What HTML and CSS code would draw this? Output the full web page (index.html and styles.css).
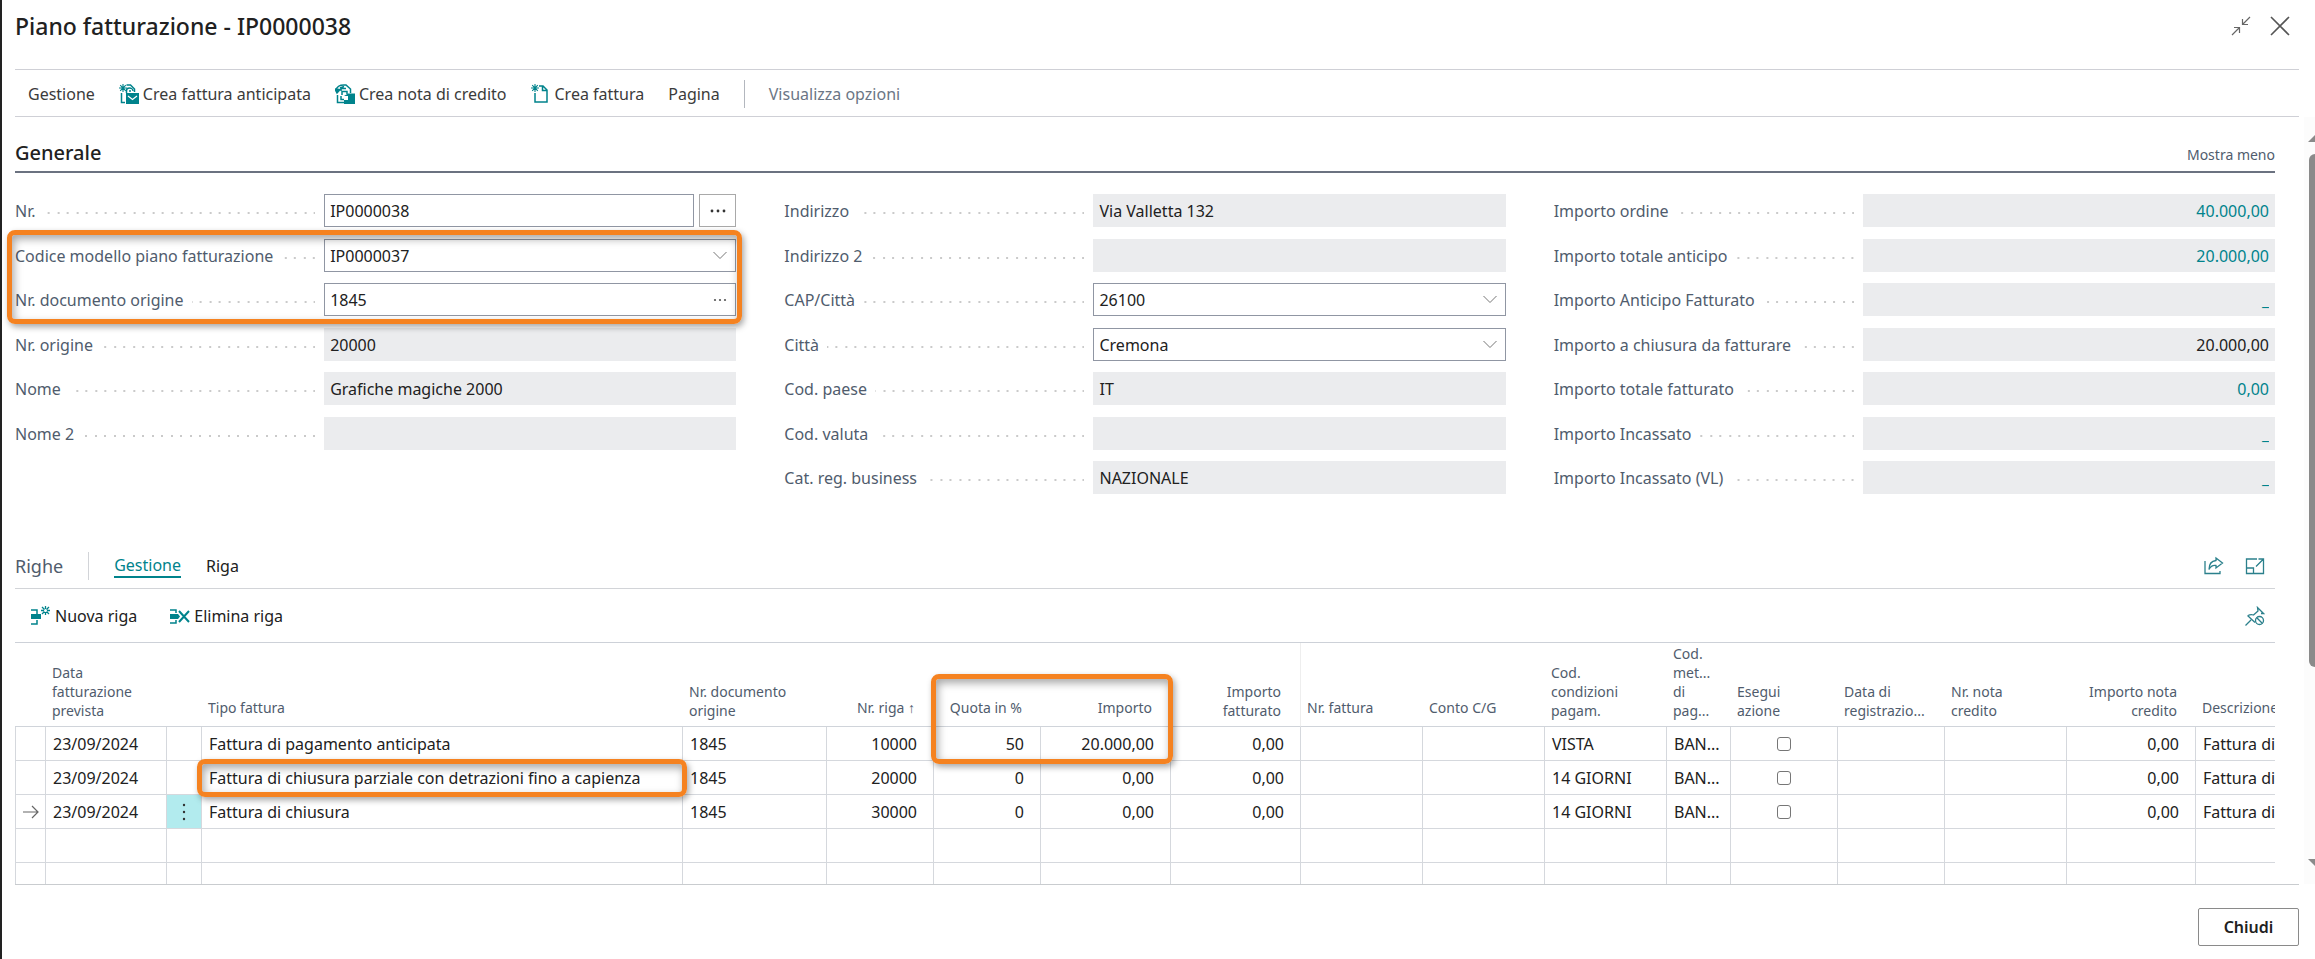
FILE: index.html
```html
<!DOCTYPE html>
<html lang="it">

<head>
    <meta charset="utf-8">
    <title>Piano fatturazione - IP0000038</title>
    <link rel="stylesheet" href="styles.css">
</head>

<body>
    <div class="dialog">
        <header class="dialog-header">
            <h1>Piano fatturazione - IP0000038</h1>
            <div class="window-buttons">
                <button type="button" aria-label="Riduci">
                    <svg width="20" height="20" viewBox="0 0 20 20" fill="none" stroke="#666" stroke-width="1.2">
                        <path d="M1 19L8.500 11.500M3 11.500H8.500V17M19 1L11.500 8.500M11.500 3V8.500H17" />
                    </svg>
                </button>
                <button type="button" aria-label="Chiudi finestra">
                    <svg width="20" height="20" viewBox="0 0 20 20" fill="none" stroke="#555" stroke-width="1.6">
                        <path d="M1 1L19 19M19 1L1 19" />
                    </svg>
                </button>
            </div>
        </header>

        <nav class="toolbar">
            <button type="button">Gestione</button>
            <button type="button">
                <svg width="20" height="20" viewBox="0 0 20 20" fill="none" stroke="#00838c" stroke-width="1.5">
                    <path d="M4 0V8M0 4H8M1.200 1.200L6.800 6.800M6.800 1.200L1.200 6.800" stroke-width="1.1" />
                    <path d="M2.500 9V18.500H6M7.500 1H11.500L15.500 5V8" />
                    <path d="M7.500 9V6.500C7.500 5 9 4 10.500 4S14 5 14 7M10 7H12" />
                    <rect x="7" y="9" width="13" height="11" fill="#00838c" stroke="none" />
                    <path d="M9 12L13.500 15.500L18 12" stroke="#fff" stroke-width="1.2" />
                </svg>
                Crea fattura anticipata
            </button>
            <button type="button">
                <svg width="20" height="20" viewBox="0 0 20 20" fill="none" stroke="#00838c" stroke-width="1.5">
                    <path d="M1 6C2 2 5 1 9 1H11L15.500 5V9" />
                    <path d="M0 5L2 9L5 5.500Z" fill="#00838c" />
                    <path d="M5 4L9 2.500M6 7V4.500H11M7 11V7.500H12V10M2.500 11V18.500H9M6 12V15.500H9" />
                    <path d="M9 12L13 9.500H20V20H9V16H13V12Z" fill="#00838c" stroke="none" />
                </svg>
                Crea nota di credito
            </button>
            <button type="button">
                <svg width="20" height="20" viewBox="0 0 20 20" fill="none" stroke="#00838c" stroke-width="1.5">
                    <path d="M4 0V8M0 4H8M1.200 1.200L6.800 6.800M6.800 1.200L1.200 6.800" stroke-width="1.1" />
                    <path d="M4 9V18H16V6L12 2H8M11.500 2V6.500H16" />
                </svg>
                Crea fattura
            </button>
            <button type="button">Pagina</button>
            <span class="divider"></span>
            <button type="button" class="muted">Visualizza opzioni</button>
        </nav>

        <div class="content">
            <main class="page">
                <section>
                    <div class="section-title">
                        <h2>Generale</h2>
                        <button type="button" class="show-less">Mostra meno</button>
                    </div>

                    <div class="columns">
                        <div class="fields">
                            <div class="field">
                                <label for="nr">Nr.</label>
                                <div class="control with-button">
                                    <input type="text" id="nr" value="IP0000038">
                                    <button type="button" class="assist" aria-label="Modifica assistita">
                                        <svg width="16" height="4" viewBox="0 0 16 4" fill="#333">
                                            <circle cx="2" cy="2" r="1.400" />
                                            <circle cx="8" cy="2" r="1.400" />
                                            <circle cx="14" cy="2" r="1.400" />
                                        </svg>
                                    </button>
                                </div>
                            </div>
                            <div class="field">
                                <label for="modello">Codice modello piano fatturazione</label>
                                <div class="control">
                                    <select id="modello">
                                        <option>IP0000037</option>
                                    </select>
                                    <svg class="chevron" width="14" height="9" viewBox="0 0 14 9">
                                        <path d="M0.500 1L7 7.500L13.500 1" />
                                    </svg>
                                </div>
                            </div>
                            <div class="field">
                                <label for="doc-origine">Nr. documento origine</label>
                                <div class="control">
                                    <input type="text" id="doc-origine" value="1845">
                                    <button type="button" class="lookup" aria-label="Cerca documento">
                                        <svg width="14" height="4" viewBox="0 0 14 4" fill="#555">
                                            <circle cx="2" cy="2" r="1.100" />
                                            <circle cx="7" cy="2" r="1.100" />
                                            <circle cx="12" cy="2" r="1.100" />
                                        </svg>
                                    </button>
                                </div>
                            </div>
                            <div class="field">
                                <label for="nr-origine">Nr. origine</label>
                                <div class="control"><input type="text" id="nr-origine" value="20000" readonly></div>
                            </div>
                            <div class="field">
                                <label for="nome">Nome</label>
                                <div class="control"><input type="text" id="nome" value="Grafiche magiche 2000" readonly></div>
                            </div>
                            <div class="field">
                                <label for="nome2">Nome 2</label>
                                <div class="control"><input type="text" id="nome2" value="" readonly></div>
                            </div>
                            <div class="highlight highlight-fields"></div>
                        </div>

                        <div class="fields">
                            <div class="field">
                                <label for="indirizzo">Indirizzo</label>
                                <div class="control"><input type="text" id="indirizzo" value="Via Valletta 132" readonly></div>
                            </div>
                            <div class="field">
                                <label for="indirizzo2">Indirizzo 2</label>
                                <div class="control"><input type="text" id="indirizzo2" value="" readonly></div>
                            </div>
                            <div class="field">
                                <label for="cap">CAP/Città</label>
                                <div class="control">
                                    <select id="cap">
                                        <option>26100</option>
                                    </select>
                                    <svg class="chevron" width="14" height="9" viewBox="0 0 14 9">
                                        <path d="M0.500 1L7 7.500L13.500 1" />
                                    </svg>
                                </div>
                            </div>
                            <div class="field">
                                <label for="citta">Città</label>
                                <div class="control">
                                    <select id="citta">
                                        <option>Cremona</option>
                                    </select>
                                    <svg class="chevron" width="14" height="9" viewBox="0 0 14 9">
                                        <path d="M0.500 1L7 7.500L13.500 1" />
                                    </svg>
                                </div>
                            </div>
                            <div class="field">
                                <label for="paese">Cod. paese</label>
                                <div class="control"><input type="text" id="paese" value="IT" readonly></div>
                            </div>
                            <div class="field">
                                <label for="valuta">Cod. valuta</label>
                                <div class="control"><input type="text" id="valuta" value="" readonly></div>
                            </div>
                            <div class="field">
                                <label for="business">Cat. reg. business</label>
                                <div class="control"><input type="text" id="business" value="NAZIONALE" readonly></div>
                            </div>
                        </div>

                        <div class="fields">
                            <div class="field">
                                <label for="imp-ordine">Importo ordine</label>
                                <div class="control"><input type="text" id="imp-ordine" class="amount link" value="40.000,00" readonly></div>
                            </div>
                            <div class="field">
                                <label for="imp-anticipo">Importo totale anticipo</label>
                                <div class="control"><input type="text" id="imp-anticipo" class="amount link" value="20.000,00" readonly></div>
                            </div>
                            <div class="field">
                                <label for="imp-anticipo-fatt">Importo Anticipo Fatturato</label>
                                <div class="control"><input type="text" id="imp-anticipo-fatt" class="amount link" value="_" readonly></div>
                            </div>
                            <div class="field">
                                <label for="imp-chiusura">Importo a chiusura da fatturare</label>
                                <div class="control"><input type="text" id="imp-chiusura" class="amount" value="20.000,00" readonly></div>
                            </div>
                            <div class="field">
                                <label for="imp-fatturato">Importo totale fatturato</label>
                                <div class="control"><input type="text" id="imp-fatturato" class="amount link" value="0,00" readonly></div>
                            </div>
                            <div class="field">
                                <label for="imp-incassato">Importo Incassato</label>
                                <div class="control"><input type="text" id="imp-incassato" class="amount link" value="_" readonly></div>
                            </div>
                            <div class="field">
                                <label for="imp-incassato-vl">Importo Incassato (VL)</label>
                                <div class="control"><input type="text" id="imp-incassato-vl" class="amount link" value="_" readonly></div>
                            </div>
                        </div>
                    </div>
                </section>

                <section>
                    <div class="lines-title">
                        <h2>Righe</h2>
                        <span class="divider"></span>
                        <button type="button" class="tab active">Gestione</button>
                        <button type="button" class="tab">Riga</button>
                        <div class="lines-icons">
                            <button type="button" aria-label="Condividi">
                                <svg width="20" height="20" viewBox="0 0 20 20" fill="none" stroke="#2b808c" stroke-width="1.3">
                                    <path d="M1 5V17.500H16V15" />
                                    <path d="M12 2L18.500 7L12 12V9.500C9 9 6.500 10.500 5 13.500C5 8.500 7.500 5 12 4.500Z" />
                                </svg>
                            </button>
                            <button type="button" aria-label="Espandi">
                                <svg width="20" height="20" viewBox="0 0 20 20" fill="none" stroke="#2b808c" stroke-width="1.3">
                                    <path d="M12 3H1.500V17.500H18.500V8M1.500 12H8.500V17.500M11 10.500L18 3.500M13.500 3H18.500V8" />
                                </svg>
                            </button>
                        </div>
                    </div>

                    <div class="lines-actions">
                        <button type="button">
                            <svg width="20" height="20" viewBox="0 0 20 20" fill="none" stroke="#00838c" stroke-width="1.5">
                                <path d="M0 4H6V8M0 18H6V14" />
                                <rect x="0" y="8" width="10" height="5" fill="#00838c" stroke="none" />
                                <path d="M14.500 0V9M10 4.500H19M11 1L18 8M18 1L11 8" stroke-width="1.3" />
                                <circle cx="14.500" cy="4.500" r="1.500" fill="#fff" stroke="none" />
                            </svg>
                            Nuova riga
                        </button>
                        <button type="button">
                            <svg width="20" height="20" viewBox="0 0 20 20" fill="none" stroke="#00838c" stroke-width="1.5">
                                <path d="M0 4H6V7M0 17H6V14" />
                                <path d="M0 8H8L10 10.500L8 13H0Z" fill="#00838c" stroke="none" />
                                <path d="M9 5L19 16M19 5L9 16" stroke-width="2" />
                            </svg>
                            Elimina riga
                        </button>
                        <button type="button" class="unpin" aria-label="Sblocca">
                            <svg width="20" height="20" viewBox="0 0 20 20" fill="none" stroke="#2b808c" stroke-width="1.3">
                                <path d="M0.500 19.500L6 14M2.500 9.500L10 16.500M3 9.500C5 8.500 7 8.500 8.500 9L13 5L12.500 1.500L18.500 7.500L16 7.500" />
                                <circle cx="14.500" cy="14.500" r="4" />
                                <path d="M11.800 11.800L17.200 17.200" />
                            </svg>
                        </button>
                    </div>

                    <div class="table-wrap">
                        <table class="lines">
                            <colgroup>
                                <col class="c-arrow">
                                <col class="c-date">
                                <col class="c-menu">
                                <col class="c-type">
                                <col class="c-doc">
                                <col class="c-number">
                                <col class="c-number">
                                <col class="c-amount">
                                <col class="c-amount">
                                <col class="c-code">
                                <col class="c-code">
                                <col class="c-code">
                                <col class="c-method">
                                <col class="c-number">
                                <col class="c-number">
                                <col class="c-code">
                                <col class="c-credit">
                                <col class="c-description">
                            </colgroup>
                            <thead>
                                <tr>
                                    <th></th>
                                    <th>Data<br>fatturazione<br>prevista</th>
                                    <th></th>
                                    <th class="single">Tipo fattura</th>
                                    <th>Nr. documento<br>origine</th>
                                    <th class="single num">Nr. riga ↑</th>
                                    <th class="single num">Quota in %</th>
                                    <th class="single num">Importo</th>
                                    <th class="num freeze">Importo<br>fatturato</th>
                                    <th class="single">Nr. fattura</th>
                                    <th class="single">Conto C/G</th>
                                    <th>Cod.<br>condizioni<br>pagam.</th>
                                    <th>Cod.<br>met...<br>di<br>pag...</th>
                                    <th>Esegui<br>azione</th>
                                    <th>Data di<br>registrazio...</th>
                                    <th>Nr. nota<br>credito</th>
                                    <th class="num">Importo nota<br>credito</th>
                                    <th class="single">Descrizione</th>
                                </tr>
                            </thead>
                            <tbody>
                                <tr>
                                    <td></td>
                                    <td>23/09/2024</td>
                                    <td></td>
                                    <td>Fattura di pagamento anticipata</td>
                                    <td>1845</td>
                                    <td class="num">10000</td>
                                    <td class="num">50</td>
                                    <td class="num">20.000,00</td>
                                    <td class="num">0,00</td>
                                    <td></td>
                                    <td></td>
                                    <td>VISTA</td>
                                    <td>BAN...</td>
                                    <td class="check"><input type="checkbox" aria-label="Esegui azione 10000"></td>
                                    <td></td>
                                    <td></td>
                                    <td class="num">0,00</td>
                                    <td>Fattura di</td>
                                </tr>
                                <tr>
                                    <td></td>
                                    <td>23/09/2024</td>
                                    <td></td>
                                    <td>Fattura di chiusura parziale con detrazioni fino a capienza</td>
                                    <td>1845</td>
                                    <td class="num">20000</td>
                                    <td class="num">0</td>
                                    <td class="num">0,00</td>
                                    <td class="num">0,00</td>
                                    <td></td>
                                    <td></td>
                                    <td>14 GIORNI</td>
                                    <td>BAN...</td>
                                    <td class="check"><input type="checkbox" aria-label="Esegui azione 20000"></td>
                                    <td></td>
                                    <td></td>
                                    <td class="num">0,00</td>
                                    <td>Fattura di</td>
                                </tr>
                                <tr>
                                    <td class="icon">
                                        <svg width="16" height="14" viewBox="0 0 16 14" fill="none" stroke="#666" stroke-width="1.2">
                                            <path d="M0 7H15M9 1L15 7L9 13" />
                                        </svg>
                                    </td>
                                    <td>23/09/2024</td>
                                    <td class="icon row-menu">
                                        <button type="button" aria-label="Altre opzioni">
                                            <svg width="4" height="18" viewBox="0 0 4 18" fill="#333">
                                                <circle cx="2" cy="2" r="1.200" />
                                                <circle cx="2" cy="9" r="1.200" />
                                                <circle cx="2" cy="16" r="1.200" />
                                            </svg>
                                        </button>
                                    </td>
                                    <td>Fattura di chiusura</td>
                                    <td>1845</td>
                                    <td class="num">30000</td>
                                    <td class="num">0</td>
                                    <td class="num">0,00</td>
                                    <td class="num">0,00</td>
                                    <td></td>
                                    <td></td>
                                    <td>14 GIORNI</td>
                                    <td>BAN...</td>
                                    <td class="check"><input type="checkbox" aria-label="Esegui azione 30000"></td>
                                    <td></td>
                                    <td></td>
                                    <td class="num">0,00</td>
                                    <td>Fattura di</td>
                                </tr>
                                <tr>
                                    <td></td><td></td><td></td><td></td><td></td><td></td><td></td><td></td><td></td>
                                    <td></td><td></td><td></td><td></td><td></td><td></td><td></td><td></td><td></td>
                                </tr>
                                <tr>
                                    <td></td><td></td><td></td><td></td><td></td><td></td><td></td><td></td><td></td>
                                    <td></td><td></td><td></td><td></td><td></td><td></td><td></td><td></td><td></td>
                                </tr>
                            </tbody>
                        </table>
                        <div class="highlight highlight-type"></div>
                        <div class="highlight highlight-quota"></div>
                    </div>
                </section>
            </main>

            <div class="scrollbar">
                <span class="arrow-up"></span>
                <span class="track"><span class="thumb"></span></span>
                <span class="arrow-down"></span>
            </div>
        </div>

        <footer class="dialog-footer">
            <button type="button" class="close-button">Chiudi</button>
        </footer>
    </div>
</body>

</html>
```

FILE: styles.css
```css
* {
    box-sizing: border-box;
}

body {
    margin: 0;
    font-family: "Segoe UI", "Noto Sans", "Open Sans", sans-serif;
    font-size: 16px;
    line-height: 22px;
    color: #212121;
    background-color: #fff;
}

h1,
h2 {
    margin: 0;
    font-weight: 500;
}

button {
    display: inline-flex;
    align-items: center;
    gap: 4px;
    padding: 0;
    border: none;
    background: none;
    font: inherit;
    color: inherit;
    white-space: nowrap;
    cursor: pointer;
}

svg {
    display: block;
    flex: none;
}

.dialog {
    display: flex;
    flex-direction: column;
    height: 100vh;
    border-left: 2px solid #222;
    overflow: hidden;
}

/* Header */
.dialog-header {
    display: flex;
    justify-content: space-between;
    align-items: center;
    padding: 10px 25px 27px 13px;
}

.dialog-header h1 {
    font-size: 23px;
    line-height: 32px;
}

.window-buttons {
    display: flex;
    gap: 19px;
}

.toolbar {
    display: flex;
    align-items: center;
    gap: 24px;
    height: 48px;
    margin: 0 16px 0 13px;
    padding: 2px 0 0 13px;
    border-top: 1px solid #cfd0d6;
    border-bottom: 1px solid #cfd0d6;
    color: #3b3b3b;
}

.divider {
    width: 1px;
    height: 28px;
    background-color: #b3b7be;
}

.toolbar .muted {
    color: #6b7685;
}

/* Scrolling area */
.content {
    display: flex;
    flex: 1;
    min-height: 0;
    overflow: hidden;
}

.page {
    flex: 1;
    min-width: 0;
    padding: 0 29px 0 13px;
}

.section-title {
    display: flex;
    justify-content: space-between;
    align-items: center;
    padding: 22px 0 4px;
    border-bottom: 2px solid #6b7280;
}

.section-title h2 {
    font-size: 20px;
    line-height: 28px;
}

.show-less {
    padding-top: 4px;
    font-size: 14px;
    color: #505c6d;
}

/* Fields */
.columns {
    display: grid;
    grid-template-columns: repeat(3, 1fr);
    gap: 48px;
    margin-top: 21px;
}

.fields {
    position: relative;
    display: grid;
    grid-auto-rows: 45px 44px;
    align-content: start;
}

.field {
    display: grid;
    grid-template-columns: 3fr 4fr;
    align-items: start;
}

.field label {
    display: flex;
    align-items: center;
    height: 33px;
    color: #505c6d;
    white-space: nowrap;
}

/* dotted leader between caption and value */
.field label::after {
    content: "";
    flex: 1;
    height: 2px;
    margin: 4px 9px 0 8px;
    background-image: linear-gradient(90deg, transparent 8px, #cacaca 8px, #cacaca 10px, transparent 10px, transparent 17px, #cacaca 17px);
    background-size: 19px 2px;
    background-position: right top;
}

.control {
    position: relative;
    display: flex;
    height: 33px;
}

.control input,
.control select {
    width: 100%;
    height: 33px;
    margin: 0;
    padding: 1px 5px 0;
    border: 1px solid #9096a3;
    border-radius: 0;
    background-color: #fff;
    font: inherit;
    color: #212121;
    appearance: none;
}

.control input:read-only {
    border-color: #ebecee;
    background-color: #ebecee;
}

.control .amount {
    text-align: right;
}

.control .link {
    color: #00838c;
}

.with-button {
    gap: 5px;
}

.with-button input {
    flex: 1;
    min-width: 0;
}

.assist {
    justify-content: center;
    width: 37px;
    border: 1px solid #a9a9a9;
}

.chevron {
    position: absolute;
    top: 12px;
    right: 9px;
    fill: none;
    stroke: #777;
    pointer-events: none;
}

.lookup {
    position: absolute;
    top: 0;
    right: 9px;
    height: 33px;
}

/* Orange markers */
.highlight {
    position: absolute;
    border: 5px solid #f58220;
    border-radius: 8px;
    box-shadow: 2px 3px 6px rgba(0, 0, 0, 0.35), inset 2px 4px 8px rgba(0, 0, 0, 0.35);
    pointer-events: none;
}

.highlight-fields {
    top: 36px;
    left: -8px;
    right: -6px;
    height: 94px;
}

.highlight-type {
    top: 116px;
    left: 182px;
    width: 490px;
    height: 38px;
}

.highlight-quota {
    top: 31px;
    left: 916px;
    width: 242px;
    height: 90px;
}

/* Lines */
.lines-title {
    display: flex;
    align-items: center;
    gap: 25px;
    height: 46px;
    margin-top: 37px;
    border-bottom: 1px solid #d2d4d8;
}

.lines-title h2 {
    font-size: 18px;
    font-weight: 400;
    color: #505c6d;
}

.lines-title .divider {
    background-color: #d2d4d8;
}

.tab.active {
    border-bottom: 2px solid #00838c;
    color: #00838c;
}

.lines-icons {
    display: flex;
    gap: 21px;
    margin-left: auto;
    padding-right: 10px;
}

.lines-actions {
    display: flex;
    align-items: center;
    gap: 33px;
    height: 54px;
    padding: 0 10px 0 16px;
    border-bottom: 1px solid #cdd1d8;
}

.unpin {
    margin-left: auto;
}

.table-wrap {
    position: relative;
    overflow: hidden;
}

.lines {
    width: 2400px;
    table-layout: fixed;
    border-collapse: separate;
    border-spacing: 0;
}

.c-arrow {
    width: 31px;
}

.c-date {
    width: 121px;
}

.c-menu {
    width: 35px;
}

.c-type {
    width: 481px;
}

.c-doc {
    width: 144px;
}

.c-number {
    width: 107px;
}

.c-amount {
    width: 130px;
}

.c-code {
    width: 122px;
}

.c-method {
    width: 64px;
}

.c-credit {
    width: 129px;
}

.lines th {
    height: 84px;
    padding: 0 0 6px 6px;
    border-bottom: 1px solid #d0d4da;
    font-size: 14px;
    font-weight: 400;
    line-height: 19px;
    text-align: left;
    vertical-align: bottom;
    white-space: nowrap;
    color: #505c6d;
}

.lines th.single {
    line-height: 24px;
}

.lines th.num {
    padding-right: 19px;
    text-align: right;
}

.lines th.freeze {
    border-right: 1px solid #eee;
}

.lines td {
    height: 34px;
    padding: 0 0 0 7px;
    border-right: 1px solid #d5d8dd;
    border-bottom: 1px solid #d5d8dd;
    white-space: nowrap;
}

.lines td:first-child {
    border-left: 1px solid #d5d8dd;
}

.lines td.num {
    padding-right: 16px;
    text-align: right;
}

.lines td.icon {
    padding: 0 7px;
}

.lines td.row-menu {
    padding: 0;
    background-color: #b2ebee;
}

.row-menu button {
    display: flex;
    justify-content: center;
    width: 100%;
}

.lines td.check {
    padding: 0;
    text-align: center;
}

.check input {
    display: block;
    width: 14px;
    height: 14px;
    margin: 0 auto;
    border: 1px solid #767676;
    border-radius: 3px;
    background-color: #fff;
    appearance: none;
}

/* Scrollbar, partly cut by the window edge */
.scrollbar {
    display: flex;
    flex-direction: column;
    width: 11px;
    padding: 17px 0 17px 4px;
    background-color: #fcfcfc;
    overflow: hidden;
}

.arrow-up,
.arrow-down {
    width: 16px;
    border-left: 8px solid transparent;
    border-right: 8px solid transparent;
}

.arrow-up {
    border-bottom: 8px solid #8a8a8a;
}

.arrow-down {
    border-top: 8px solid #8a8a8a;
}

.track {
    flex: 1;
    width: 12px;
    margin-left: 1px;
    padding: 12px 0;
}

.thumb {
    display: block;
    height: 74%;
    border-radius: 6px;
    background-color: #8a8a8a;
}

/* Footer */
.dialog-footer {
    display: flex;
    justify-content: flex-end;
    margin: 0 16px 0 13px;
    padding: 23px 0 13px;
    border-top: 1px solid #c9cccf;
}

.close-button {
    justify-content: center;
    width: 101px;
    height: 38px;
    border: 1px solid #8a8a8a;
    border-radius: 2px;
    font-weight: 600;
}
```
